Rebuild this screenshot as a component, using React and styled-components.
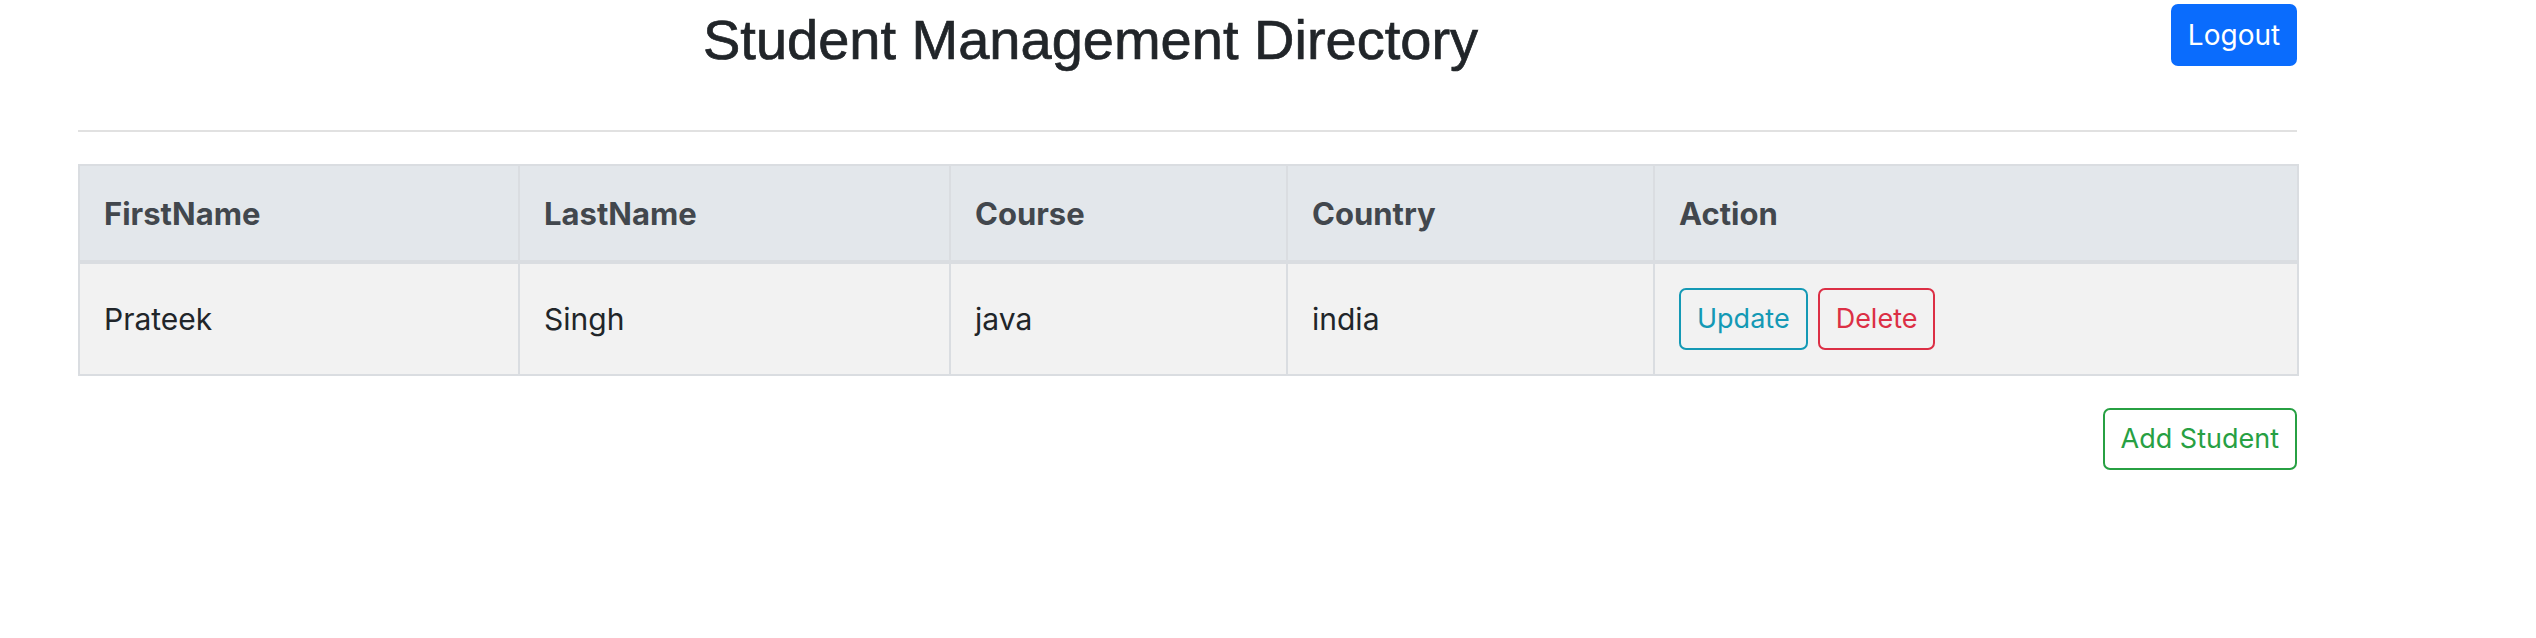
import React from 'react';
import styled, { createGlobalStyle } from 'styled-components';

const GlobalStyle = createGlobalStyle`
	body {
		margin: 0;
		background: #ffffff;
		font-family: Inter, 'Liberation Sans', sans-serif;
		color: #212529;
	}
`;

const Page = styled.div`
	width: 2219px;
	padding-left: 78px;
`;

const Header = styled.div`
	display: flex;
	align-items: flex-start;
`;

const Title = styled.h1`
	flex: 1;
	margin: 6px 68px 0 0;
	text-align: center;
	font-family: 'Liberation Sans', Arial, sans-serif;
	font-size: 56px;
	font-weight: 400;
	line-height: 67px;
	color: #212529;
	-webkit-text-stroke: 0.7px #212529;
`;

const Button = styled.button`
	font-family: Inter, 'Liberation Sans', sans-serif;
	font-size: 27px;
	line-height: 42px;
	padding: 8px 16px;
	border: 2px solid ${(p) => p.color};
	border-radius: 7px;
	background: ${(p) => (p.solid ? p.color : 'transparent')};
	color: ${(p) => (p.solid ? '#ffffff' : p.color)};
	cursor: pointer;
`;

const LogoutButton = styled(Button)`
	margin-top: 4px;
	width: 126px;
	padding: 8px 0;
	font-size: 28px;
`;

const Rule = styled.hr`
	margin: 57px 0 32px;
	border: 0;
	border-top: 2px solid #e1e1e1;
`;

const Table = styled.table`
	width: 100%;
	border-collapse: collapse;
	border: 2px solid #dadde1;
	table-layout: fixed;
`;

const Col = styled.col`
	width: ${(p) => p.w}px;
`;

const HeadCell = styled.th`
	background: #e3e7eb;
	color: #42474d;
	font-size: 31px;
	font-weight: 700;
	line-height: 43px;
	text-align: left;
	padding: 26px 24px 25px;
	border: 2px solid #dadde1;
	border-bottom-width: 4px;
`;

const Cell = styled.td`
	background: #f2f2f2;
	font-size: 30px;
	line-height: 43px;
	padding: 24px 24px;
	border: 2px solid #dadde1;
	vertical-align: middle;
`;

const Actions = styled.div`
	display: flex;
	gap: 10px;
`;

const Footer = styled.div`
	display: flex;
	justify-content: flex-end;
	margin-top: 32px;
`;

const columns = [
	{ label: 'FirstName', w: 440 },
	{ label: 'LastName', w: 431 },
	{ label: 'Course', w: 337 },
	{ label: 'Country', w: 367 },
	{ label: 'Action', w: 644 },
];

const students = [
	{ firstName: 'Prateek', lastName: 'Singh', course: 'java', country: 'india' },
];

const App = () => {
	return (
		<Page>
			<GlobalStyle />
			<Header>
				<Title>Student Management Directory</Title>
				<LogoutButton solid color='#0a6cfd'>Logout</LogoutButton>
			</Header>
			<Rule />
			<Table>
				<colgroup>
					{columns.map((c) => (
						<Col key={c.label} w={c.w} />
					))}
				</colgroup>
				<thead>
					<tr>
						{columns.map((c) => (
							<HeadCell key={c.label}>{c.label}</HeadCell>
						))}
					</tr>
				</thead>
				<tbody>
					{students.map((s, i) => (
						<tr key={i}>
							<Cell>{s.firstName}</Cell>
							<Cell>{s.lastName}</Cell>
							<Cell>{s.course}</Cell>
							<Cell>{s.country}</Cell>
							<Cell>
								<Actions>
									<Button color='#1499b5'>Update</Button>
									<Button color='#dc2f45'>Delete</Button>
								</Actions>
							</Cell>
						</tr>
					))}
				</tbody>
			</Table>
			<Footer>
				<Button color='#27a043'>Add Student</Button>
			</Footer>
		</Page>
	);
};

export default App;
